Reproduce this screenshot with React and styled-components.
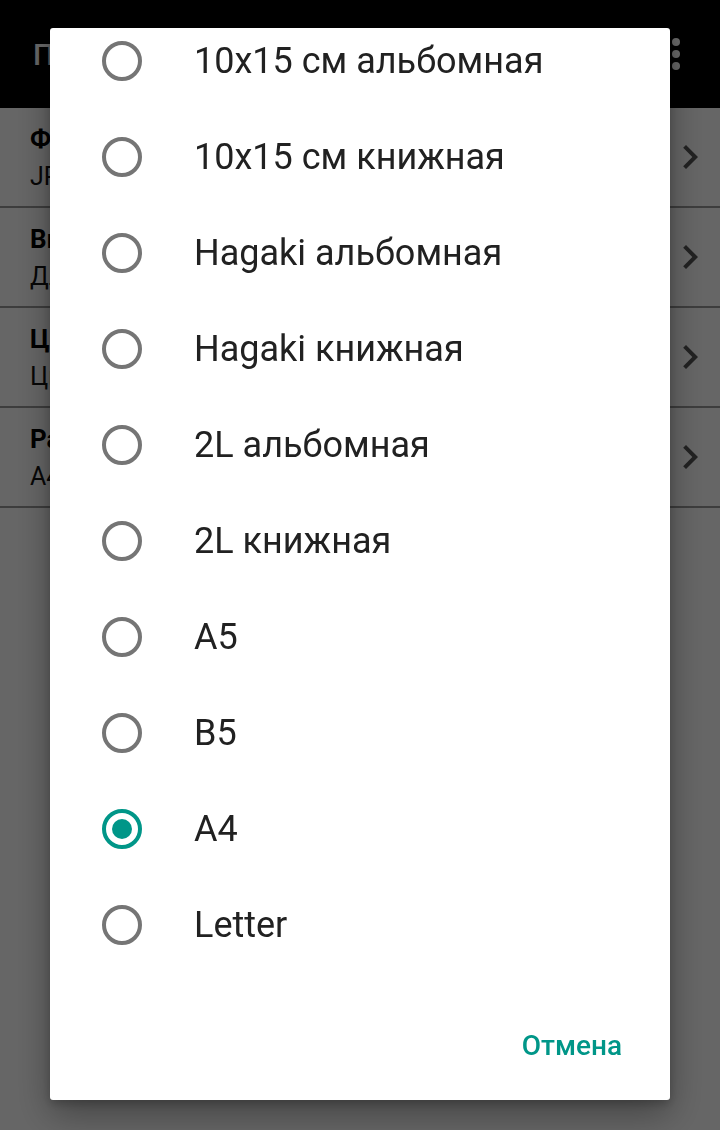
import {useLayoutEffect, useRef} from 'react'
import styled, {createGlobalStyle} from "styled-components";

const GlobalStyle = createGlobalStyle`
    html, body {
        margin: 0;
        padding: 0;
        background: #fff;
        font-family: Roboto, "Noto Sans", "Liberation Sans", sans-serif;
    }
`

const Page = styled.div`
    display: flex;
    flex-direction: column;
    width: 720px;
    min-height: 1130px;
    background: #fff;
`

const AppBar = styled.div`
    display: flex;
    align-items: center;
    justify-content: space-between;
    height: 108px;
    padding: 0 20px 0 33px;
    box-sizing: border-box;
    background: #000;
    color: #fff;
    font-size: 30px;
    font-weight: 500;
`

const Row = styled.div`
    display: flex;
    align-items: center;
    height: 100px;
    padding: 0 6px 0 30px;
    border-bottom: 2px solid #999;
    box-sizing: border-box;
`

const RowText = styled.div`
    flex: 1;
    display: flex;
    flex-direction: column;
    gap: 8px;
    color: #000;
    b {
        font-size: 26px;
        font-weight: 700;
    }
    span {
        font-size: 25px;
        color: #111;
    }
`

const Overlay = styled.div`
    position: fixed;
    inset: 0;
    background: rgba(0, 0, 0, 0.6);
`

const Dialog = styled.div`
    position: fixed;
    top: 28px;
    left: 50px;
    width: 620px;
    bottom: 30px;
    display: flex;
    flex-direction: column;
    background: #fff;
    border-radius: 3px;
    box-shadow: 0 14px 36px rgba(0, 0, 0, 0.35), 0 4px 10px rgba(0, 0, 0, 0.2);
`

const OptionList = styled.div`
    flex: 1;
    overflow-y: auto;
    padding: 16px 0 24px;
    scrollbar-width: none;
    &::-webkit-scrollbar {
        display: none;
    }
`

const Option = styled.div`
    display: flex;
    align-items: center;
    gap: 52px;
    height: 96px;
    padding-left: 52px;
    font-size: 36px;
    color: #212121;
`

const Radio = styled.span`
    position: relative;
    flex: none;
    width: 40px;
    height: 40px;
    box-sizing: border-box;
    border: 4px solid ${props => props.checked ? '#009688' : '#757575'};
    border-radius: 50%;
    &::after {
        content: '';
        display: ${props => props.checked ? 'block' : 'none'};
        position: absolute;
        top: 6px;
        left: 6px;
        width: 20px;
        height: 20px;
        border-radius: 50%;
        background: #009688;
    }
`

const ButtonBar = styled.div`
    display: flex;
    align-items: center;
    justify-content: flex-end;
    height: 110px;
    padding-right: 32px;
`

const TextButton = styled.button`
    border: none;
    background: none;
    padding: 8px 16px;
    font-family: inherit;
    font-size: 28px;
    font-weight: 500;
    color: #009688;
`

const Chevron = () => (
    <svg width="48" height="48" viewBox="0 0 24 24" fill="#555">
        <path d="M8.59 16.59L13.17 12 8.59 7.41 10 6l6 6-6 6-1.41-1.41z"/>
    </svg>
)

const MoreIcon = () => (
    <svg width="48" height="48" viewBox="0 0 24 24" fill="#fff">
        <circle cx="12" cy="6" r="2"/>
        <circle cx="12" cy="12" r="2"/>
        <circle cx="12" cy="18" r="2"/>
    </svg>
)

const settings = [
    {title: 'Формат файла', value: 'JPEG'},
    {title: 'Выбор лотка', value: 'Для фото'},
    {title: 'Цвет', value: 'Цветной'},
    {title: 'Размер бумаги', value: 'A4'},
]

const sizes = [
    '10x15 см альбомная',
    '10x15 см книжная',
    'Hagaki альбомная',
    'Hagaki книжная',
    '2L альбомная',
    '2L книжная',
    'A5',
    'B5',
    'A4',
    'Letter',
]

const App = () => {
    const listRef = useRef(null)

    // список прокручен чуть вниз, как на снимке
    useLayoutEffect(() => {
        if (listRef.current) listRef.current.scrollTop = 31
    }, [])

    return (
        <>
            <GlobalStyle/>
            <Page>
                <AppBar>
                    <span>Параметры печати</span>
                    <MoreIcon/>
                </AppBar>
                {settings.map(s => (
                    <Row key={s.title}>
                        <RowText>
                            <b>{s.title}</b>
                            <span>{s.value}</span>
                        </RowText>
                        <Chevron/>
                    </Row>
                ))}
            </Page>
            <Overlay/>
            <Dialog>
                <OptionList ref={listRef}>
                    {sizes.map(size => (
                        <Option key={size}>
                            <Radio checked={size === 'A4'}/>
                            {size}
                        </Option>
                    ))}
                </OptionList>
                <ButtonBar>
                    <TextButton>Отмена</TextButton>
                </ButtonBar>
            </Dialog>
        </>
    )
}

export default App
